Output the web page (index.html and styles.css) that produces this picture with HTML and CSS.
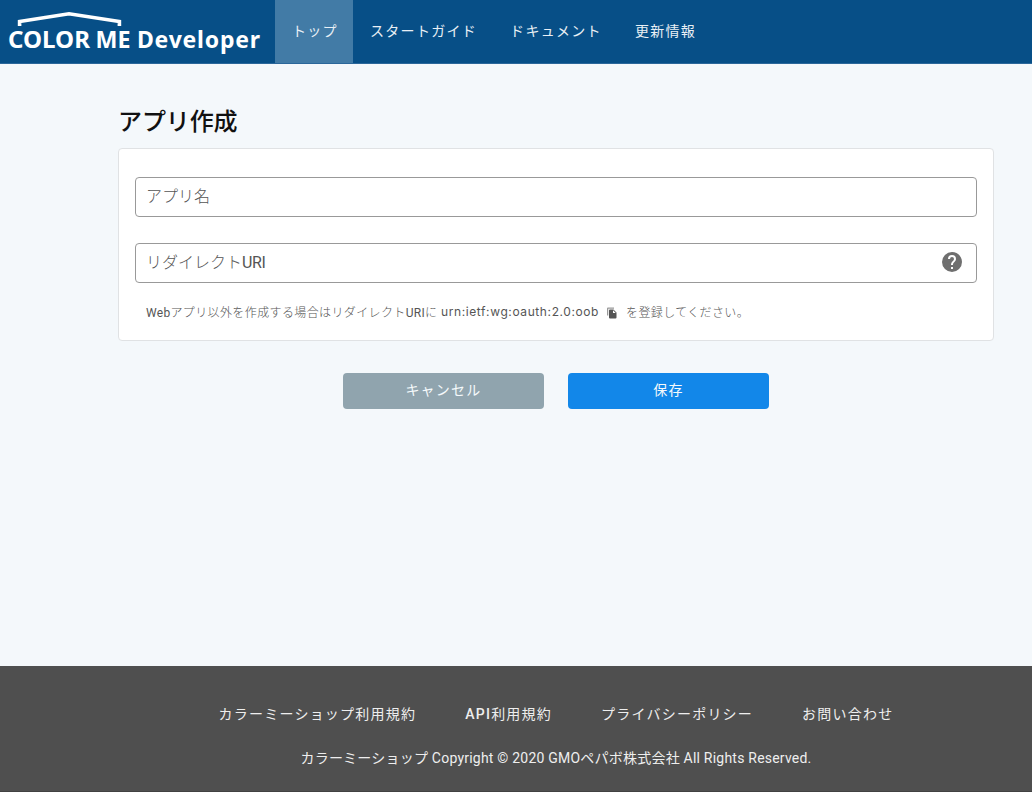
FILE: index.html
```html
<!DOCTYPE html>
<html lang="ja">
<head>
<meta charset="utf-8">
<title>アプリ作成</title>
<link rel="stylesheet" href="styles.css">
</head>
<body>
<header class="header">
  <a class="logo">
    <svg width="275" height="64" viewBox="0 0 275 64" role="img">
      <path d="M19.6 26V21.5L69 13.8L119.4 21.5V26" fill="none" stroke="#fff" stroke-width="3.6"/>
      <g class="logo-text">
        <text x="8" y="48" textLength="82" lengthAdjust="spacingAndGlyphs">COLOR</text>
        <text x="95.5" y="48" textLength="35" lengthAdjust="spacingAndGlyphs">ME</text>
        <text class="developer" x="137" y="48" textLength="123" lengthAdjust="spacing">Developer</text>
      </g>
    </svg>
  </a>
  <nav class="nav">
    <a class="nav-item active">トップ</a>
    <a class="nav-item">スタートガイド</a>
    <a class="nav-item">ドキュメント</a>
    <a class="nav-item">更新情報</a>
  </nav>
</header>
<main class="main">
  <h1 class="title">アプリ作成</h1>
  <section class="card">
    <div class="field"><span>アプリ名</span></div>
    <div class="field"><span>リダイレクト<span class="uri">URI</span></span>
      <svg class="help" width="24" height="24" viewBox="0 0 24 24"><path fill="#6f6f6f" d="M15.07 11.25l-.9.92C13.45 12.89 13 13.5 13 15h-2v-.5c0-1.11.45-2.11 1.17-2.83l1.24-1.26c.37-.36.59-.86.59-1.41a2 2 0 0 0-2-2 2 2 0 0 0-2 2H8a4 4 0 0 1 4-4 4 4 0 0 1 4 4c0 .88-.36 1.67-.93 2.25M13 19h-2v-2h2M12 2A10 10 0 0 0 2 12a10 10 0 0 0 10 10 10 10 0 0 0 10-10c0-5.53-4.5-10-10-10z"/></svg>
    </div>
    <p class="hint"><span class="hint-lead"><span class="latin">Web</span>アプリ以外を作成する場合はリダイレクト<span class="latin">URI</span>に</span><span class="urn">urn:ietf:wg:oauth:2.0:oob</span><svg class="copy" width="12" height="12" viewBox="0 0 24 24"><path fill="#999" d="M16 1H4a2 2 0 0 0-2 2v14h2.500V3.500H16z"/><path fill="#555" d="M8 5h7l6 6v10a2 2 0 0 1-2 2H8a2 2 0 0 1-2-2V7a2 2 0 0 1 2-2m6 1.500V12h5.500z"/></svg><span>を登録してください。</span></p>
  </section>
  <div class="actions">
    <button class="btn cancel">キャンセル</button>
    <button class="btn save">保存</button>
  </div>
</main>
<footer class="footer">
  <nav class="footer-links">
    <a>カラーミーショップ利用規約</a>
    <a><b>API</b>利用規約</a>
    <a>プライバシーポリシー</a>
    <a>お問い合わせ</a>
  </nav>
  <p class="copyright">カラーミーショップ Copyright © 2020 GMOペパボ株式会社 All Rights Reserved.</p>
</footer>
</body>
</html>
```
FILE: styles.css
```css
* { box-sizing: border-box; }
body {
  margin: 0;
  height: 792px;
  display: flex;
  flex-direction: column;
  background: #f4f8fb;
  font-family: Roboto, "Noto Sans CJK JP", sans-serif;
  font-size: 16px;
  white-space: nowrap;
  overflow: hidden;
}
.header {
  display: flex;
  height: 64px;
  background: #074f87;
  border-bottom: 1px solid #2b679a;
}
.logo { display: flex; width: 275px; }
.logo-text {
  fill: #fff;
  font-family: "Noto Sans", "Open Sans", sans-serif;
  font-size: 24px;
  font-weight: 700;
}
.developer { font-size: 23px; }
.nav { display: flex; }
.nav-item {
  display: flex;
  align-items: center;
  padding: 0 16px 3px 17px;
  color: #e9eff5;
  font-size: 14px;
  letter-spacing: 1.3px;
}
.active { width: 78px; background: #427ba6; }
.main { flex: 1; padding: 41px 38px 0 118px; }
.title {
  margin: 0;
  height: 43px;
  line-height: 34px;
  font-size: 24px;
  font-weight: 500;
  letter-spacing: -0.1px;
  color: #111;
}
.card {
  height: 193px;
  padding: 28px 16px 0;
  background: #fff;
  border: 1px solid #e0e2e4;
  border-radius: 4px;
}
.field {
  display: flex;
  align-items: center;
  justify-content: space-between;
  height: 40px;
  margin-bottom: 26px;
  padding: 0 12px 0 10px;
  border: 1px solid #999;
  border-radius: 4px;
  color: #555;
  font-weight: 300;
}
.field > span { padding-bottom: 4px; }
.uri { font-weight: 400; letter-spacing: -0.4px; }
.help { display: block; margin-bottom: 2px; }
.hint {
  display: flex;
  align-items: center;
  height: 20px;
  margin: -8px 0 0 11px;
  color: #555;
  font-size: 12px;
  font-weight: 300;
  letter-spacing: 0.38px;
}
.hint-lead { width: 295px; }
.latin { font-weight: 400; letter-spacing: 0.3px; }
.urn {
  width: 165px;
  font-family: Inter, sans-serif;
  font-weight: 400;
  letter-spacing: 0.6px;
}
.copy { margin: 4px 8px 0 0; }
.actions {
  display: flex;
  justify-content: center;
  gap: 24px;
  margin-top: 32px;
}
.btn {
  width: 201px;
  height: 36px;
  padding: 0 0 4px;
  border: 0;
  border-radius: 4px;
  color: #f5f9fb;
  font: 400 14px Roboto, "Noto Sans CJK JP", sans-serif;
  letter-spacing: 1.25px;
}
.cancel { background: #90a4ae; }
.save { background: #1287e9; }
.footer {
  height: 126px;
  padding: 37px 0 0 80px;
  background: #4f4f4f;
  border-bottom: 1px solid #414141;
  color: #eee;
  font-size: 14px;
}
.footer-links {
  display: flex;
  justify-content: center;
  gap: 49px;
  line-height: 22px;
  letter-spacing: 1.23px;
}
.footer-links b { font-weight: 500; }
.copyright {
  margin: 22px 0 0;
  text-align: center;
  line-height: 22px;
  letter-spacing: 0.22px;
}
```
